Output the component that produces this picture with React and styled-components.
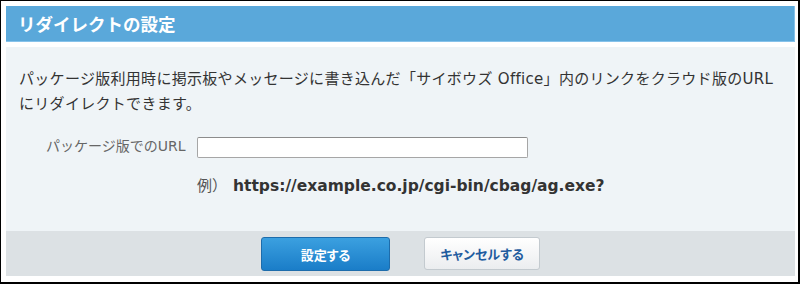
import React from "react";
import styled, { createGlobalStyle } from "styled-components";

const Global = createGlobalStyle`
  html, body { margin: 0; padding: 0; background: #fff; }
  body { font-family: "DejaVu Sans", "Noto Sans CJK JP", sans-serif; }
  * { box-sizing: border-box; }
`;

const Frame = styled.div`
  width: 800px;
  height: 284px;
  border: 1px solid #000;
  border-right-width: 2px;
  border-bottom-width: 2px;
  padding: 5px 3px 6px 5px;
  background: #fff;
  display: flex;
  flex-direction: column;
`;

const Header = styled.div`
  height: 36px;
  flex: none;
  background: #5aa8da;
  border-right: 1px solid #86c2ea;
  border-bottom: 1px solid #86c2ea;
  display: flex;
  align-items: center;
  padding-left: 12px;
`;

const Title = styled.h1`
  margin: 0;
  font-family: "Noto Sans CJK JP", sans-serif;
  font-size: 17.5px;
  font-weight: 700;
  color: #fff;
  line-height: 1;
`;

const Body = styled.div`
  margin-top: 5px;
  flex: 1;
  display: flex;
  flex-direction: column;
`;

const Panel = styled.div`
  flex: 1;
  background: #eff4f7;
  padding: 20px 13px 0 13px;
`;

const Desc = styled.p`
  margin: 0;
  font-size: 15px;
  line-height: 25px;
  letter-spacing: 0.3px;
  color: #333;
`;

const Form = styled.div`
  margin-top: 19px;
  margin-left: 27px;
  display: grid;
  grid-template-columns: 151px 1fr;
  row-gap: 16px;
`;

const Label = styled.label`
  font-size: 14px;
  line-height: 20px;
  color: #666;
`;

const Input = styled.input`
  margin-top: 1px;
  width: 331px;
  height: 21px;
  border: 1px solid #a6a6a6;
  border-top-color: #8c8c8c;
  border-radius: 2px;
  background: #fff;
  padding: 0 4px;
  font-size: 14px;
  outline: none;
`;

const Example = styled.div`
  grid-column: 2;
  display: flex;
  align-items: baseline;
  line-height: 24px;
`;

const ExLabel = styled.span`
  font-size: 15px;
  color: #555;
  margin-right: 6px;
`;

const ExUrl = styled.span`
  font-size: 15.5px;
  font-weight: 700;
  color: #333;
`;

const Footer = styled.div`
  height: 45px;
  flex: none;
  background: #dce1e4;
  display: flex;
  justify-content: center;
  align-items: flex-start;
  padding-top: 6px;
  gap: 34px;
`;

const Button = styled.button`
  height: ${(p) => (p.$primary ? "34px" : "33px")};
  width: ${(p) => p.$w}px;
  border-radius: 3px;
  font-family: "Noto Sans CJK JP", sans-serif;
  font-feature-settings: "palt";
  font-size: 13px;
  font-weight: 700;
  cursor: pointer;
  padding: 0;
  border: 1px solid ${(p) => (p.$primary ? "#1d6cab" : "#c3cacf")};
  color: ${(p) => (p.$primary ? "#fff" : "#1f5c9f")};
  background: ${(p) =>
    p.$primary
      ? "linear-gradient(#3ba0e0, #1a7dc8)"
      : "linear-gradient(#ffffff, #ebedef)"};
`;

export default function App() {
  return (
    <>
      <Global />
      <Frame>
        <Header>
          <Title>リダイレクトの設定</Title>
        </Header>
        <Body>
          <Panel>
            <Desc>
              パッケージ版利用時に掲示板やメッセージに書き込んだ「サイボウズ Office」内のリンクをクラウド版のURL
              <br />
              にリダイレクトできます。
            </Desc>
            <Form>
              <Label htmlFor="pkg-url">パッケージ版でのURL</Label>
              <Input id="pkg-url" type="text" />
              <Example>
                <ExLabel>例）</ExLabel>
                <ExUrl>https://example.co.jp/cgi-bin/cbag/ag.exe?</ExUrl>
              </Example>
            </Form>
          </Panel>
          <Footer>
            <Button $primary $w={129}>設定する</Button>
            <Button $w={116}>キャンセルする</Button>
          </Footer>
        </Body>
      </Frame>
    </>
  );
}
